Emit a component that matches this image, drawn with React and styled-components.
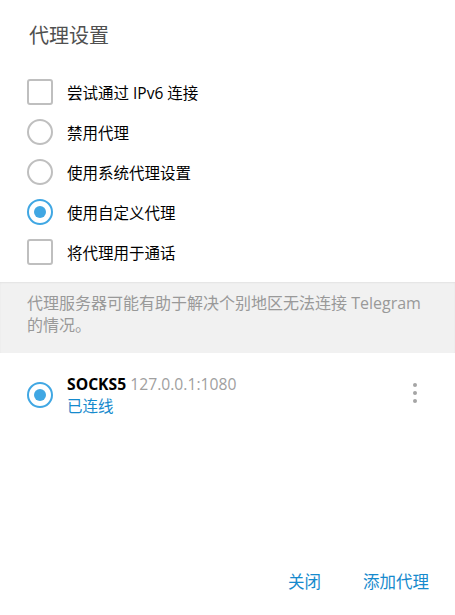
import React from 'react';
import styled, { createGlobalStyle } from 'styled-components';

const GlobalStyle = createGlobalStyle`
  html, body {
    margin: 0;
    padding: 0;
    background: #ffffff;
  }
  body {
    font-family: "Open Sans", "Noto Sans CJK SC", sans-serif;
  }
`;

const Box = styled.div`
  width: 455px;
  height: 615px;
  background: #ffffff;
  display: flex;
  flex-direction: column;
`;

const Title = styled.div`
  padding: 22px 0 0 29px;
  height: 28px;
  font-size: 20px;
  line-height: 28px;
  color: #505050;
`;

const Options = styled.div`
  display: flex;
  flex-direction: column;
  padding: 22px 0 10px 27px;
`;

const OptionRow = styled.label`
  display: flex;
  align-items: center;
  height: 40px;
  gap: 14px;
  font-size: 15.5px;
  color: #000000;
  cursor: pointer;
`;

const Check = styled.span`
  box-sizing: border-box;
  width: 26px;
  height: 26px;
  border: 2px solid #bfbfbf;
  border-radius: 3px;
  flex: none;
`;

const Radio = styled.span`
  box-sizing: border-box;
  width: 26px;
  height: 26px;
  border: 2px solid ${p => (p.$on ? '#40a7e3' : '#bfbfbf')};
  border-radius: 50%;
  flex: none;
  display: flex;
  align-items: center;
  justify-content: center;
  &::after {
    content: '';
    display: ${p => (p.$on ? 'block' : 'none')};
    width: 12px;
    height: 12px;
    border-radius: 50%;
    background: #40a7e3;
  }
`;

const Note = styled.div`
  background: #f1f1f1;
  box-shadow: inset 0 1px 2px rgba(0, 0, 0, 0.06);
  padding: 10px 30px 17px 27px;
  font-size: 16px;
  line-height: 22px;
  color: #999999;
`;

const ProxyRow = styled.div`
  display: flex;
  align-items: center;
  padding: 20px 27px 0 27px;
  gap: 14px;
`;

const ProxyInfo = styled.div`
  flex: 1;
  display: flex;
  flex-direction: column;
  font-size: 15.7px;
  line-height: 22px;
`;

const ProxyName = styled.div`
  color: #000000;
  b {
    font-weight: 700;
  }
  span {
    color: #a0a0a0;
  }
`;

const Status = styled.div`
  color: #168acd;
  font-size: 15.5px;
`;

const MenuDots = styled.div`
  display: flex;
  flex-direction: column;
  gap: 3.4px;
  margin: -4px 11px 0 0;
  span {
    width: 4.5px;
    height: 4.5px;
    border-radius: 50%;
    background: #a5a5a5;
  }
`;

const Spacer = styled.div`
  flex: 1;
`;

const Buttons = styled.div`
  display: flex;
  justify-content: flex-end;
  gap: 42px;
  padding: 0 26px 22px 0;
`;

const Button = styled.button`
  border: none;
  background: none;
  padding: 0;
  font-family: "Open Sans", "Noto Sans CJK SC", sans-serif;
  font-size: 16.5px;
  line-height: 22px;
  color: #168acd;
  cursor: pointer;
`;

export default function App() {
  return (
    <>
      <GlobalStyle />
      <Box>
        <Title>代理设置</Title>
        <Options>
          <OptionRow><Check />尝试通过 IPv6 连接</OptionRow>
          <OptionRow><Radio />禁用代理</OptionRow>
          <OptionRow><Radio />使用系统代理设置</OptionRow>
          <OptionRow><Radio $on />使用自定义代理</OptionRow>
          <OptionRow><Check />将代理用于通话</OptionRow>
        </Options>
        <Note>代理服务器可能有助于解决个别地区无法连接 Telegram 的情况。</Note>
        <ProxyRow>
          <Radio $on />
          <ProxyInfo>
            <ProxyName><b>SOCKS5</b> <span>127.0.0.1:1080</span></ProxyName>
            <Status>已连线</Status>
          </ProxyInfo>
          <MenuDots><span /><span /><span /></MenuDots>
        </ProxyRow>
        <Spacer />
        <Buttons>
          <Button>关闭</Button>
          <Button>添加代理</Button>
        </Buttons>
      </Box>
    </>
  );
}
